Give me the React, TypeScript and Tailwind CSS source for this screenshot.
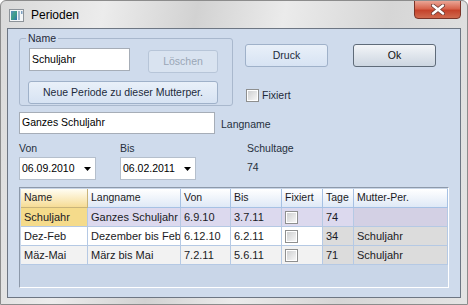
import React from "react"

const font = { fontFamily: '"Liberation Sans", Arial, sans-serif' }

type Row = {
  name: string
  lang: string
  von: string
  bis: string
  tage: string
  mutter: string
  kind: "sel" | "even" | "odd"
}

const rows: Row[] = [
  { name: "Schuljahr", lang: "Ganzes Schuljahr", von: "6.9.10", bis: "3.7.11", tage: "74", mutter: "", kind: "sel" },
  { name: "Dez-Feb", lang: "Dezember bis Februar", von: "6.12.10", bis: "6.2.11", tage: "34", mutter: "Schuljahr", kind: "even" },
  { name: "Mäz-Mai", lang: "März bis Mai", von: "7.2.11", bis: "5.6.11", tage: "71", mutter: "Schuljahr", kind: "odd" },
]

const headers = ["Name", "Langname", "Von", "Bis", "Fixiert", "Tage", "Mutter-Per."]

function WinButton({ label, width, isDefault, disabled }: { label: string; width: string; isDefault?: boolean; disabled?: boolean }) {
  const base = "h-[23px] flex items-center justify-center rounded-[3px] text-[10.5px] border"
  let look = "border-[#9fb1c9] bg-[linear-gradient(#e9f0f9,#d7e3f3)] text-[#1c2a3c]"
  if (isDefault) look = "border-[#5f6b79] bg-[linear-gradient(#f3f5f8,#dfe5ec_50%,#cdd6e1)] text-[#111]"
  if (disabled) look = "border-[#b7c5d8] bg-[#d9e3f0] text-[#9aa6b6]"
  return <div className={`${base} ${look} ${width}`}>{label}</div>
}

function CheckBox() {
  return (
    <div className="w-[13px] h-[13px] border border-[#8e8f8f] bg-white p-[1px]">
      <div className="w-full h-full bg-[linear-gradient(135deg,#cfd0d1,#f6f6f6)]" />
    </div>
  )
}

function DatePicker({ value, width }: { value: string; width: string }) {
  return (
    <div className={`h-[23px] ${width} bg-white border border-[#b5bfcc] flex items-center justify-between pl-[2px] pr-[4px] text-[10.5px] text-black`}>
      <span>{value}</span>
      <svg width="7" height="4" viewBox="0 0 7 4">
        <path d="M0 0 H7 L3.5 4 Z" fill="#000" />
      </svg>
    </div>
  )
}

function cellBg(row: Row, col: number) {
  if (row.kind === "sel") {
    if (col === 0) return "bg-[#f5db8b]"
    if (col === 6) return "bg-[#d3d0e4]"
    return "bg-[#dcd9ee]"
  }
  if (col >= 5) return "bg-[#dcdcdc]"
  return row.kind === "even" ? "bg-white" : "bg-[#f2f2f2]"
}

export default function App() {
  return (
    <div
      className="w-[468px] h-[305px] overflow-hidden bg-[linear-gradient(100deg,#d9d9d9_0%,#ececec_20%,#d2d2d2_38%,#ebebeb_55%,#d6d6d6_75%,#e4e4e4_100%)] border border-[#8c8c8c] rounded-t-[6px]"
      style={font}
    >
      {/* title bar */}
      <div className="h-[27px] flex justify-between">
        <div className="flex items-center pl-[8px] pt-[1px]">
          <svg width="15" height="13" viewBox="0 0 15 13">
            <defs>
              <linearGradient id="ic" x1="0" y1="0" x2="1" y2="1">
                <stop offset="0" stopColor="#5a8fc4" />
                <stop offset="0.5" stopColor="#3f9f86" />
                <stop offset="1" stopColor="#2f6fb0" />
              </linearGradient>
            </defs>
            <rect x="0.5" y="0.5" width="14" height="12" fill="#f4f6f8" stroke="#8d9399" />
            <rect x="2" y="2" width="6" height="9" fill="url(#ic)" />
            <rect x="9" y="2" width="2" height="9" fill="#9fb6cc" />
            <rect x="12" y="2" width="1.5" height="3" fill="#7fa0c0" />
          </svg>
          <span className="ml-[7px] text-[12px] text-black">Perioden</span>
        </div>
        <div className="mr-[6px] mt-[-1px] w-[47px] h-[19px] rounded-b-[4px] border border-[#7a3428] bg-[linear-gradient(#eaa596,#d7644d_45%,#c5432b_55%,#cf6a4f)] flex items-center justify-center">
          <svg width="14" height="11" viewBox="0 0 14 11">
            <path d="M2 1.5 L12 9.5 M12 1.5 L2 9.5" stroke="#6b3a33" strokeWidth="4" strokeLinecap="round" />
            <path d="M2 1.5 L12 9.5 M12 1.5 L2 9.5" stroke="#ffffff" strokeWidth="2.4" strokeLinecap="round" />
          </svg>
        </div>
      </div>

      {/* client area */}
      <div className="ml-[6px] w-[454px] h-[270px] border border-[#6d7683] bg-[#cfdbec] pl-[11px] text-[10.5px] text-[#26303d]">
        {/* top row */}
        <div className="flex items-start">
          <div className="relative mt-[9px] w-[214px] h-[68px] border border-[#a9b8cd] rounded-[3px] pl-[9px] pt-[9px]">
            <span className="absolute top-[-8px] left-[6px] px-[2px] bg-[#cfdbec] text-[#1e2a3a]">Name</span>
            <div className="flex items-start">
              <div className="w-[101px] h-[23px] bg-white border border-[#a6adb7] flex items-center pl-[2px] text-black">
                Schuljahr
              </div>
              <div className="ml-[18px] mt-[2px]">
                <WinButton label="Löschen" width="w-[70px]" disabled />
              </div>
            </div>
            <div className="mt-[8px] -ml-[1px]">
              <WinButton label="Neue Periode zu dieser Mutterper." width="w-[190px]" />
            </div>
          </div>
          <div className="ml-[12px] mt-[15px]">
            <div className="flex gap-[25px]">
              <WinButton label="Druck" width="w-[83px]" />
              <WinButton label="Ok" width="w-[83px]" isDefault />
            </div>
            <div className="mt-[21px] ml-[1px] flex items-center gap-[3px] text-[#1e2a3a]">
              <CheckBox />
              <span>Fixiert</span>
            </div>
          </div>
        </div>

        {/* Langname */}
        <div className="mt-[6px] flex items-center">
          <div className="w-[196px] h-[22px] bg-white border border-[#a6adb7] flex items-center pl-[2px] text-black">
            Ganzes Schuljahr
          </div>
          <span className="ml-[6px] mt-[3px]">Langname</span>
        </div>

        {/* Von / Bis labels */}
        <div className="mt-[8px] flex h-[13px] leading-[13px]">
          <span className="w-[101px]">Von</span>
          <span className="w-[127px]">Bis</span>
          <span>Schultage</span>
        </div>
        <div className="mt-[2px] flex items-center">
          <DatePicker value="06.09.2010" width="w-[77px]" />
          <div className="ml-[24px]">
            <DatePicker value="06.02.2011" width="w-[76px]" />
          </div>
          <span className="ml-[51px] -mt-[2px]">74</span>
        </div>

        {/* grid */}
        <div className="mt-[7px] w-[430px] h-[101px] border-l border-t border-[#8d99aa] border-r-white border-b-white border-r border-b bg-[#c9d6e8] pl-[1px] pt-[1px]">
          <div className="grid grid-cols-[67px_93px_50px_51px_41px_31px_94px] text-[11px] text-[#1a1a24]">
            {headers.map((h, i) => (
              <div
                key={h}
                className={`h-[19px] flex items-center pl-[3px] border-r border-b overflow-hidden whitespace-nowrap ${
                  i === 0
                    ? "bg-[linear-gradient(#fffdf3,#f6dc95)] border-[#c9b47a]"
                    : "bg-[linear-gradient(#ffffff,#dfe9f6)] border-[#a6c1e4]"
                } text-[10.5px]`}
              >
                {h}
              </div>
            ))}
            {rows.map((r) =>
              [r.name, r.lang, r.von, r.bis, "", r.tage, r.mutter].map((v, i) => (
                <div
                  key={r.name + i}
                  className={`h-[19px] flex items-center pl-[3px] border-r border-b border-[#b5c9e4] overflow-hidden whitespace-nowrap ${cellBg(r, i)}`}
                >
                  {i === 4 ? <CheckBox /> : v}
                </div>
              ))
            )}
          </div>
        </div>
      </div>
    </div>
  )
}
